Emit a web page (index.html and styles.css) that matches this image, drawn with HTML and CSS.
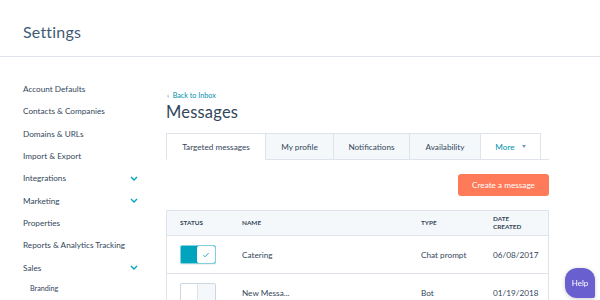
FILE: index.html
```html
<!DOCTYPE html>
<html lang="en">
<head>
  <meta charset="UTF-8" />
  <title>Settings | Messages</title>
  <link rel="stylesheet" href="styles.css">
</head>
<body>

  <header class="top-bar">
    <h1>Settings</h1>
  </header>

  <div class="layout">
    <nav class="sidebar">
      <a class="nav-item">Account Defaults</a>
      <a class="nav-item">Contacts &amp; Companies</a>
      <a class="nav-item">Domains &amp; URLs</a>
      <a class="nav-item">Import &amp; Export</a>
      <a class="nav-item">Integrations <svg class="chevron" viewBox="0 0 8 5"><path d="M1 1l3 3 3-3"/></svg></a>
      <a class="nav-item">Marketing <svg class="chevron" viewBox="0 0 8 5"><path d="M1 1l3 3 3-3"/></svg></a>
      <a class="nav-item">Properties</a>
      <a class="nav-item">Reports &amp; Analytics Tracking</a>
      <a class="nav-item">Sales <svg class="chevron" viewBox="0 0 8 5"><path d="M1 1l3 3 3-3"/></svg></a>
      <a class="nav-sub">Branding</a>
    </nav>

    <main class="content">
      <a class="back-link">&lsaquo;&nbsp; Back to Inbox</a>
      <h2>Messages</h2>

      <div class="tabs">
        <div class="tab active tab-targeted">Targeted messages</div>
        <div class="tab tab-profile">My profile</div>
        <div class="tab tab-notif">Notifications</div>
        <div class="tab tab-avail">Availability</div>
        <div class="tab more tab-more">More <span class="caret"></span></div>
      </div>

      <div class="actions">
        <button class="btn-primary">Create a message</button>
      </div>

      <div class="table">
        <div class="row head">
          <div>Status</div>
          <div>Name</div>
          <div>Type</div>
          <div>Date<br>Created</div>
        </div>
        <div class="row">
          <div>
            <span class="toggle on">
              <span class="knob"><svg viewBox="0 0 10 8"><path d="M1.5 4.2l2.3 2.1 4.7-4.8"/></svg></span>
            </span>
          </div>
          <div>Catering</div>
          <div>Chat prompt</div>
          <div>06/08/2017</div>
        </div>
        <div class="row">
          <div>
            <span class="toggle">
              <span class="knob"></span>
            </span>
          </div>
          <div>New Messa...</div>
          <div>Bot</div>
          <div>01/19/2018</div>
        </div>
      </div>
    </main>
  </div>

  <button class="help">Help</button>

</body>
</html>
```

FILE: styles.css
```css
* {
  box-sizing: border-box;
}

body {
  margin: 0;
  font-family: 'Lato', 'Noto Sans', sans-serif;
  color: #33475b;
  background: #fff;
  height: 300px;
  overflow: hidden;
}

.top-bar {
  height: 57px;
  border-bottom: 1px solid #dfe3eb;
  padding: 6px 0 0 23px;
  display: flex;
  align-items: center;
}

.top-bar h1 {
  margin: 0;
  font-size: 16px;
  font-weight: 400;
  color: #425b76;
  letter-spacing: 0.2px;
}

.layout {
  display: flex;
}

.sidebar {
  width: 166px;
  padding: 21px 28px 0 23px;
  display: flex;
  flex-direction: column;
}

.nav-item {
  height: 22.3px;
  font-size: 8.2px;
  display: flex;
  align-items: center;
  justify-content: space-between;
  color: #33475b;
}

.chevron {
  width: 8px;
  height: 5px;
  fill: none;
  stroke: #00a4bd;
  stroke-width: 1.4;
}

.nav-sub {
  font-size: 7.2px;
  padding-left: 7px;
  margin-top: 1px;
  height: 18px;
  display: flex;
  align-items: center;
}

.content {
  width: 383px;
  padding-top: 34px;
}

.back-link {
  display: block;
  font-size: 7.2px;
  color: #0091ae;
  height: 10px;
  line-height: 10px;
  padding-left: 1px;
}

.content h2 {
  margin: 0;
  font-size: 16.5px;
  font-weight: 400;
  color: #33475b;
  height: 23px;
  line-height: 23px;
  letter-spacing: 0.2px;
}

.tabs {
  margin-top: 9px;
  display: flex;
  height: 27px;
  border-bottom: 1px solid #dfe3eb;
}

.tab {
  height: 27px;
  display: flex;
  align-items: center;
  justify-content: center;
  font-size: 8.2px;
  color: #33475b;
  background: #f5f8fa;
  border: 1px solid #dfe3eb;
  border-left: none;
}

.tab.active {
  background: #fff;
  border-left: 1px solid #dfe3eb;
  border-bottom-color: #fff;
}

.tab.more {
  background: #fff;
  color: #0091ae;
}

.tab-targeted { width: 100px; }
.tab-profile { width: 68px; }
.tab-notif { width: 76px; }
.tab-avail { width: 71px; }
.tab-more { width: 60px; }

.caret {
  display: inline-block;
  margin-left: 7px;
  border-left: 2.5px solid transparent;
  border-right: 2.5px solid transparent;
  border-top: 3px solid #7c98b6;
}

.actions {
  display: flex;
  justify-content: flex-end;
  margin-top: 14px;
}

.btn-primary {
  width: 91px;
  height: 22px;
  border: none;
  border-radius: 3px;
  background: #ff7a59;
  color: #fff;
  font-family: inherit;
  font-size: 8.2px;
  padding: 0;
}

.table {
  margin-top: 14px;
  border: 1px solid #dfe3eb;
  border-bottom: none;
}

.row {
  display: grid;
  grid-template-columns: 62px 179px 72px 1fr;
  padding-left: 13px;
  height: 38px;
  align-items: center;
  font-size: 8.2px;
  border-bottom: 1px solid #dfe3eb;
}

.row.head {
  height: 25px;
  background: #f5f8fa;
  font-size: 6.4px;
  font-weight: 700;
  text-transform: uppercase;
  line-height: 8px;
  color: #33475b;
}

.toggle {
  display: flex;
  width: 36px;
  height: 19px;
  border: 1px solid #cbd6e2;
  border-radius: 2px;
  background: #fff;
  box-shadow: 0 1px 1px rgba(0, 0, 0, 0.06);
}

.toggle .knob {
  width: 18px;
  margin-left: auto;
  background: #f5f8fa;
  border-left: 1px solid #dfe3eb;
  display: flex;
  align-items: center;
  justify-content: center;
}

.toggle.on {
  background: #00a4bd;
  border-color: #7fd1de;
}

.toggle.on .knob {
  background: #fff;
  border-left: none;
  border-radius: 2px;
}

.toggle svg {
  width: 8px;
  height: 6px;
  fill: none;
  stroke: #00a4bd;
  stroke-width: 1.2;
}

.help {
  position: fixed;
  left: 565px;
  top: 268px;
  width: 30px;
  height: 30px;
  border: none;
  border-radius: 12px 12px 2px 12px;
  background: #6a5fcf;
  color: #fff;
  font-family: inherit;
  font-size: 8px;
  padding: 0;
  box-shadow: 0 1px 4px rgba(0, 0, 0, 0.2);
}
```
